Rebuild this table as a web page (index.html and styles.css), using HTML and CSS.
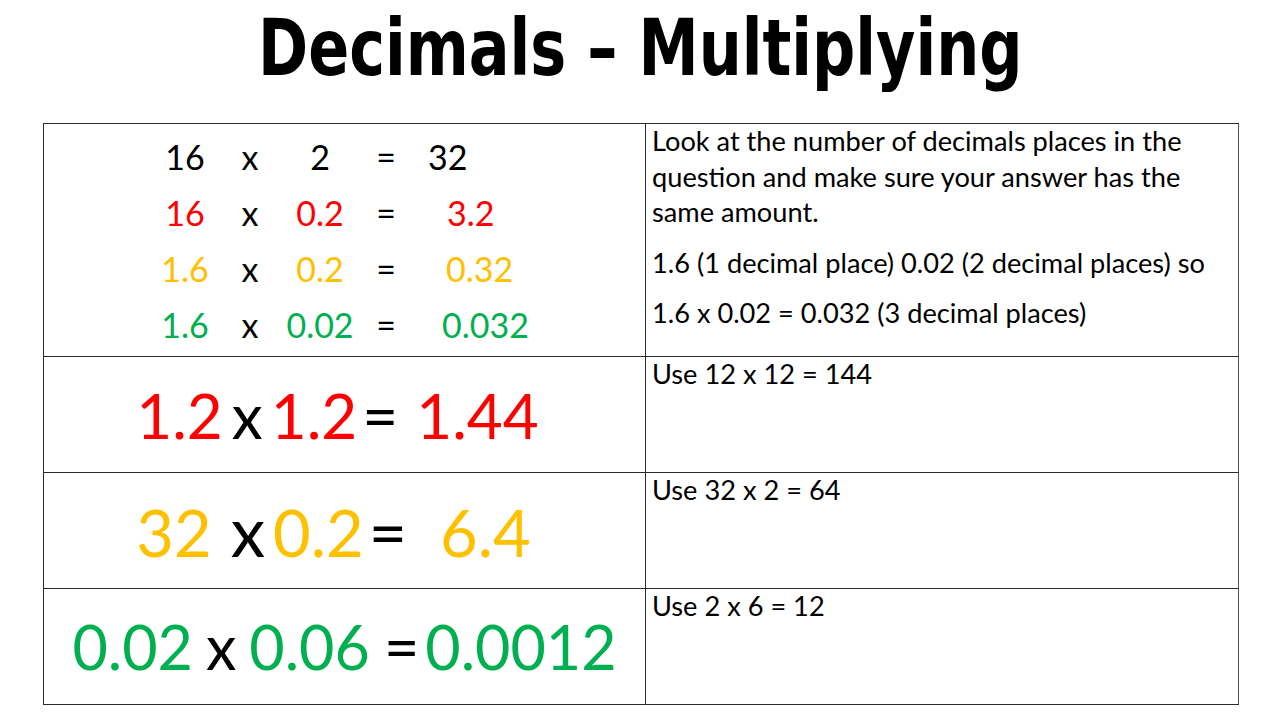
FILE: index.html
```html
<!DOCTYPE html>
<html lang="en">
<head>
<meta charset="utf-8">
<title>Decimals - Multiplying</title>
<link rel="stylesheet" href="styles.css">
</head>
<body>
<main class="slide">
  <h1 class="title"><span class="title-text">Decimals – Multiplying</span></h1>
  <section class="table">
    <div class="cell left eqs">
      <div class="eq-grid">
        <span class="n">16</span><span class="op">x</span><span class="n">2</span><span class="op">=</span><span class="ans a1">32</span>
        <span class="n red">16</span><span class="op">x</span><span class="n red">0.2</span><span class="op">=</span><span class="ans a2 red">3.2</span>
        <span class="n amber">1.6</span><span class="op">x</span><span class="n amber">0.2</span><span class="op">=</span><span class="ans a3 amber">0.32</span>
        <span class="n green">1.6</span><span class="op">x</span><span class="n green">0.02</span><span class="op">=</span><span class="ans a4 green">0.032</span>
      </div>
    </div>
    <div class="cell right notes">
      <p>Look at the number of decimals places in the question and make sure your answer has the same amount.</p>
      <p>1.6 (1 decimal place) 0.02 (2 decimal places) so</p>
      <p>1.6 x 0.02 = 0.032 (3 decimal places)</p>
    </div>

    <div class="cell left big row-red">
      <p class="big-eq"><span class="red">1.2</span><span class="m9">x</span><span class="red m8">1.2</span><span class="m5">=</span><span class="red m18">1.44</span></p>
    </div>
    <div class="cell right notes"><p>Use 12 x 12 = 144</p></div>

    <div class="cell left big row-amber">
      <p class="big-eq eq-amber"><span class="amber">32</span><span class="m19 big-x">x</span><span class="amber m8">0.2</span><span class="m5 big-op">=</span><span class="amber m33">6.4</span></p>
    </div>
    <div class="cell right notes"><p>Use 32 x 2 = 64</p></div>

    <div class="cell left big row-green">
      <p class="big-eq eq-green"><span class="green">0.02</span><span class="m13">x</span><span class="green m13">0.06</span><span class="m14">=</span><span class="green m6">0.0012</span></p>
    </div>
    <div class="cell right notes"><p>Use 2 x 6 = 12</p></div>
  </section>
</main>
</body>
</html>
```

FILE: styles.css
```css
* { box-sizing: border-box; }

html, body {
  margin: 0;
  padding: 0;
  background: #ffffff;
}

.slide {
  width: 1280px;
  height: 720px;
  overflow: hidden;
  background: #ffffff;
  color: #000000;
  font-family: Lato, "Open Sans", "Liberation Sans", sans-serif;
}

.title {
  margin: 0;
  height: 123px;
  padding-top: 3px;
  text-align: center;
  font-family: "DejaVu Sans", "Liberation Sans", sans-serif;
  font-weight: 700;
  font-size: 78px;
  line-height: 90px;
  color: #000;
}

.title-text {
  display: inline-block;
  transform: scaleX(0.775);
  transform-origin: center;
}

.table {
  margin-left: 43px;
  width: 1196px;
  display: grid;
  grid-template-columns: 603px 593px;
  grid-template-rows: 233px 116px 116px 116px;
  border-top: 1px solid #2b2b2b;
}

.cell {
  border-bottom: 1px solid #2b2b2b;
  border-right: 1px solid #2b2b2b;
}

.cell.left {
  border-left: 1px solid #2b2b2b;
}

.cell.right {
  border-right: 1px solid #555;
}

.red { color: #ff0000; }
.amber { color: #ffc000; }
.green { color: #00b050; }

/* first cell: worked examples */
.eq-grid {
  display: grid;
  grid-template-columns: 80px 50px 90px 42px 1fr;
  grid-auto-rows: 56px;
  padding-left: 101px;
  padding-top: 5px;
  font-size: 34px;
  line-height: 56px;
}

.eq-grid .n,
.eq-grid .op { text-align: center; }

.ans.a1 { padding-left: 21px; }
.ans.a2 { padding-left: 40px; }
.ans.a3 { padding-left: 39px; }
.ans.a4 { padding-left: 35px; }

/* notes */
.notes {
  padding: 0 6px 0 6px;
  font-size: 27.2px;
  line-height: 35.5px;
}

.notes p {
  margin: -1px 0 0 0;
}

.notes p + p {
  margin-top: 15px;
}

/* big equations */
.big {
  display: flex;
  align-items: center;
  justify-content: center;
}

.row-red { padding-right: 14px; }
.row-amber { padding-right: 22px; }

.big-eq {
  margin: 0;
  display: flex;
  align-items: baseline;
  font-size: 62px;
  line-height: 1;
  white-space: nowrap;
}

.eq-amber { font-size: 65px; }
.eq-green { font-size: 61px; }

.big-x { font-size: 69px; }
.big-op { font-size: 66px; }

.m5 { margin-left: 5px; }
.m6 { margin-left: 6px; }
.m8 { margin-left: 8px; }
.m9 { margin-left: 9px; }
.m13 { margin-left: 13px; }
.m14 { margin-left: 14px; }
.m18 { margin-left: 18px; }
.m19 { margin-left: 19px; }
.m33 { margin-left: 33px; }
```
